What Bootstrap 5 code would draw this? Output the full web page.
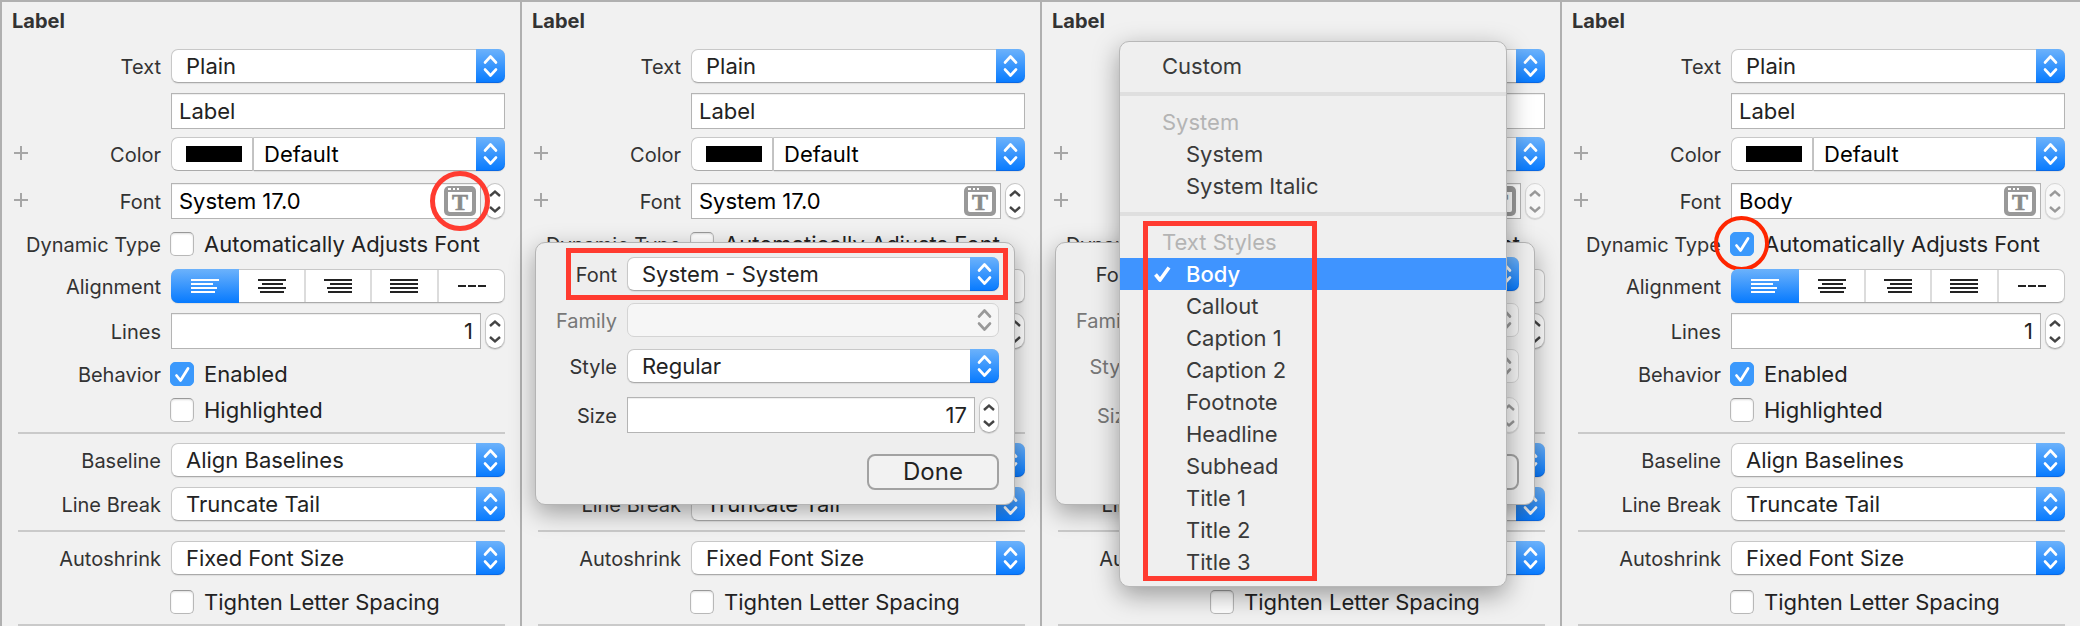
<!DOCTYPE html>
<html lang="en">
<head>
<meta charset="utf-8">
<meta name="viewport" content="width=device-width, initial-scale=1">
<title>Label inspector</title>
<link rel="stylesheet" href="https://cdn.jsdelivr.net/npm/bootstrap@5.3.0/dist/css/bootstrap.min.css">
<style>
  :root { --ink: #222; --line: #b4b4b4; --red: #ff3b30; --capw: 29px; --text: 22px; --label: 20px; }
  body { font-family: Inter, Roboto, "Liberation Sans", sans-serif; font-size: var(--text); line-height: 1; color: var(--ink); background: #f1f1f1; }
  .inspectors { border-top: 2px solid #b0b0b0; }
  .inspector { flex: 1 1 0; min-width: 480px; border-left: 2px solid #b0b0b0; }
  .inspector h2 { font-size: var(--label); font-weight: 700; line-height: 38px; height: 47px; margin: 0; padding-left: 10px; color: #333; }
  .prop { padding-right: 15px; }
  .prop-label { width: 159px; margin-right: 10px; font-size: var(--label); text-align: right; flex: none; position: relative; white-space: nowrap; color: #333; padding-top: 2px; }
  .prop-control { flex: 1 1 0; min-width: 0; }
  .gap-s { margin-top: 8px; } .gap-m { margin-top: 10px; } .gap-l { margin-top: 12px; } .gap-xl { margin-top: 14px; }
  .rule { height: 2px; margin: 9px 15px 9px 16px; background: #cacaca; border: 0; opacity: 1; }
  .rule-last { margin-bottom: 0; }
  .plus { position: absolute; left: 12px; top: 3px; width: 14px; height: 14px; padding: 0; border: 0; background: none; line-height: 0; display: block; }

  .popup { position: relative; flex: 1 1 0; min-width: 0; }
  .popup select { display: block; width: 100%; height: 34px; padding: 0 34px 0 14px; font-size: var(--text); line-height: 32px; color: var(--ink); background: #fff; border: 1px solid #c8c8c8; border-bottom-color: #aaa; border-radius: 7px; appearance: none; box-shadow: 0 1px 1px rgba(0,0,0,.08); }
  .popup::after { content: ""; position: absolute; top: 0; right: 0; width: var(--capw); height: 34px; border-radius: 0 7px 7px 0; pointer-events: none;
    background: url("data:image/svg+xml,%3Csvg xmlns='http://www.w3.org/2000/svg' width='29' height='34' fill='none' stroke='%23fff' stroke-width='2.6' stroke-linecap='round' stroke-linejoin='round'%3E%3Cpath d='M9 13.5l5.500-6 5.500 6M9 20.500l5.500 6 5.500-6'/%3E%3C/svg%3E") center no-repeat, linear-gradient(#6cb2fb, #067aff); box-shadow: inset 0 -1px 0 #0a68e4; }
  .popup.off select { background: #f6f6f6; border-color: #d4d4d4; opacity: 1; color: #777; box-shadow: none; }
  .popup.off::after { box-shadow: none; background: url("data:image/svg+xml,%3Csvg xmlns='http://www.w3.org/2000/svg' width='29' height='34' fill='none' stroke='%23999' stroke-width='2.6' stroke-linecap='round' stroke-linejoin='round'%3E%3Cpath d='M9 13.5l5.500-6 5.500 6M9 20.500l5.500 6 5.500-6'/%3E%3C/svg%3E") center no-repeat; }
  .well { width: 83px; height: 34px; flex: none; padding: 0 10px 0 14px; background: #fff; border: 1px solid #c8c8c8; border-right: 2px solid #c4c4c4; border-bottom-color: #aaa; border-radius: 7px 0 0 7px; }
  .well span { display: block; height: 16px; background: #000; }
  .well + .popup select { border-left: 0; border-radius: 0 7px 7px 0; padding-left: 10px; color: #000; }

  .field { width: 100%; height: 36px; padding: 0 7px; font-size: var(--text); line-height: 34px; background: #fff; color: var(--ink); border: 1px solid var(--line); border-radius: 0; box-shadow: inset 0 1px 1px #eee; }
  .field-font { color: #000; }
  .fontpick { position: absolute; top: 3px; right: 5px; width: 32px; height: 30px; padding: 0; border: 0; background: none; line-height: 0; }
  .stepper { width: 20px; height: 36px; margin-left: 4px; flex: none; display: flex; flex-direction: column; background: #fff; border: 1px solid #c6c6c6; border-bottom-color: #aaa; border-radius: 10px; box-shadow: 0 1px 1px rgba(0,0,0,.12); color: #444; }
  .stepper button { flex: 1; width: 100%; padding: 0; border: 0; background: none; color: inherit; line-height: 0; display: flex; justify-content: center; align-items: center; }
  .stepper.off { color: #999; background: #f8f8f8; border-color: #d6d6d6; }

  .tick { height: 26px; position: relative; }
  .tick input { appearance: none; width: 24px; height: 24px; margin: 0 10px 0 -1px; flex: none; border: 1px solid #b8b8b8; border-top-color: #999; border-radius: 5px; background: #fff; box-shadow: inset 0 1px 2px #ddd; }
  .tick input:checked { border-color: #3b99fc; box-shadow: none; background: #3b99fc url("data:image/svg+xml,%3Csvg xmlns='http://www.w3.org/2000/svg' viewBox='0 0 22 22' fill='none' stroke='%23fff' stroke-width='2.8' stroke-linecap='round' stroke-linejoin='round'%3E%3Cpath d='M5.500 12.500l4 5L17 5.500'/%3E%3C/svg%3E") center no-repeat; }
  .tick label { white-space: nowrap; }

  .segments { height: 34px; border: 1px solid #c8c8c8; border-bottom-color: #aaa; border-radius: 7px; background: #fff; box-shadow: 0 1px 1px rgba(0,0,0,.08); }
  .segments label { width: 20%; flex: none; display: flex; align-items: center; justify-content: center; border-right: 2px solid #dcdcdc; color: #222; }
  .segments label:last-child { border-right: 0; }
  .segments input:checked + label { background: linear-gradient(#6cb2fb, #067aff); color: #fff; width: calc(20% + 2px); margin: -1px 0 -1px -1px; border-right: 0; border-radius: 7px 0 0 7px; }

  .ring { position: absolute; border: 5px solid var(--red); pointer-events: none; }
  .ring-font { border-radius: 50%; width: 60px; height: 60px; top: -12px; right: -9px; z-index: 2; }
  .ring-tick { border-radius: 50%; border: 4px solid #ff2600; width: 55px; height: 55px; top: -15px; left: -17px; }

  .font-popover { position: absolute; top: 240px; left: 13px; right: 25px; padding: 14px 15px; background: #eee; border: 1px solid #b4b4b4; border-radius: 10px; box-shadow: 0 8px 24px rgba(0,0,0,.34); }
  .font-popover .prop { padding-right: 0; }
  .font-popover .prop-label { width: 66px; }
  .font-popover .dim { color: #777; }
  .ring-row { top: -9px; bottom: -9px; left: 15px; right: -9px; }
  .done { width: 132px; height: 36px; padding: 0; font-size: 24px; line-height: 32px; color: var(--ink); background: #f2f2f2; border: 2px solid #a2a2a2; border-radius: 8px; margin-top: 21px; }

  .font-menu { position: absolute; top: 39px; left: 77px; right: 53px; padding: 8px 0; margin: 0; list-style: none; background: #efefef; border: 1px solid #b8b8b8; border-radius: 10px; box-shadow: 0 8px 26px rgba(0,0,0,.36); color: #3a3a3a; }
  .font-menu ul { list-style: none; margin: 0; padding: 0; position: relative; }
  .font-menu .entry { display: block; width: 100%; height: 32px; padding: 0 0 0 66px; line-height: 32px; font-size: var(--text); text-align: left; border: 0; background: none; color: inherit; position: relative; }
  .font-menu .top { padding-left: 42px; }
  .font-menu .heading { color: #b4b4b4; }
  .font-menu .chosen { background: #3f94ff; color: #fff; font-weight: 500; }
  .font-menu .chosen svg { position: absolute; left: 34px; top: 8px; }
  .font-menu .split { height: 4px; margin: 10px 0; background: #dfdfdf; }
  .ring-styles { top: -5px; bottom: -3px; left: 23px; width: 174px; }
</style>
</head>
<body>
<main class="inspectors d-flex" id="inspectors"></main>

<script>
const bars = d => `<svg width="28" height="14" stroke="currentColor" stroke-width="2"><path d="${d}"/></svg>`;
const icons = {
  left: bars('M0 1h28M0 5h22M0 9h26M0 13h24'),
  center: bars('M0 1h28M4 5h21M0 9h28M2 13h24'),
  right: bars('M0 1h28M6 5h22M3 9h25M4 13h24'),
  justified: bars('M0 1h28M0 5h28M0 9h28M0 13h28'),
  natural: bars('M0 7h8M10 7h8M20 7h8'),
  plus: '<svg width="14" height="14" stroke="#a6a6a6" stroke-width="2"><path d="M7 0v14M0 7h14"/></svg>',
  up: '<svg width="12" height="8" fill="none" stroke="currentColor" stroke-width="2.400"><path d="M1 7l5-4.500L11 7"/></svg>',
  down: '<svg width="12" height="8" fill="none" stroke="currentColor" stroke-width="2.400"><path d="M1 1l5 4.500L11 1"/></svg>',
  check: '<svg width="17" height="16" fill="none" stroke="#fff" stroke-width="3.600" stroke-linejoin="round"><path d="M1.500 8.500l4.500 5.500L15 1.500"/></svg>',
  font: `<svg width="32" height="30"><rect width="32" height="30" rx="5" fill="#999"/><path d="M4 6h24v18a2 2 0 0 1-2 2H6a2 2 0 0 1-2-2z" fill="#fff"/>
    <path d="M4 2h3v2H4zM9 2h2v2H9zM13 2h2v2h-2z" fill="#fff"/><text x="16" y="24" text-anchor="middle" font-family="Liberation Serif, serif" font-weight="700" font-size="24" fill="#8a8a8a" stroke="#8a8a8a" stroke-width=".6">T</text></svg>`
};

const row = (gap, label, forId, control, { plus = false, dim = false, extra = '' } = {}) => `
  <div class="prop d-flex align-items-center position-relative ${gap}">
    <label class="prop-label ${dim ? 'dim' : ''}" ${forId ? `for="${forId}"` : ''}>${plus ? `<button type="button" class="plus" aria-label="Add variation">${icons.plus}</button>` : ''}${label}</label>
    <div class="prop-control d-flex">${control}</div>${extra}
  </div>`;
const popup = (id, value, off = false) => `
  <div class="popup ${off ? 'off' : ''}"><select id="${id}" ${off ? 'disabled' : ''}><option>${value}</option></select></div>`;
const stepper = (off = false) => `
  <div class="stepper ${off ? 'off' : ''}"><button type="button" aria-label="Increase">${icons.up}</button><button type="button" aria-label="Decrease">${icons.down}</button></div>`;
const tick = (id, text, on = false, extra = '') => `
  <div class="tick d-flex align-items-center"><input type="checkbox" id="${id}" ${on ? 'checked' : ''}><label for="${id}">${text}</label>${extra}</div>`;
const segments = id => `
  <div class="segments d-flex flex-grow-1" role="group" aria-label="Alignment">${['left', 'center', 'right', 'justified', 'natural'].map((a, i) => `
    <input type="radio" class="btn-check" name="${id}" id="${id}-${a}" ${i ? '' : 'checked'}><label for="${id}-${a}" aria-label="${a}">${icons[a]}</label>`).join('')}
  </div>`;
const fontField = (id, o) => `
  <div class="position-relative flex-grow-1">
    <input class="field field-font" id="${id}" value="${o.font}">
    <button type="button" class="fontpick" aria-label="Choose font">${icons.font}</button>
    ${o.markFont ? '<span class="ring ring-font"></span>' : ''}
  </div>${stepper(o.lockSize)}`;

const fontPopover = (p, o) => `
  <section class="font-popover">
    ${row('', 'Font', p + 'pf', popup(p + 'pf', o.fontChoice), { extra: o.markRow ? '<span class="ring ring-row"></span>' : '' })}
    ${row('gap-l', 'Family', p + 'pfam', popup(p + 'pfam', '', true), { dim: true })}
    ${row('gap-l', 'Style', p + 'pst', popup(p + 'pst', o.locked ? '' : 'Regular', o.locked), { dim: o.locked })}
    ${row('gap-xl', 'Size', p + 'psz', `<input class="field text-end" id="${p}psz" value="${o.locked ? '' : '17'}">${stepper(o.locked)}`, { dim: o.locked })}
    <div class="d-flex justify-content-end"><button type="button" class="done">${o.locked ? '' : 'Done'}</button></div>
  </section>`;

const entry = (t, cls = '') => `<li><button type="button" class="entry ${cls}">${cls.includes('chosen') ? icons.check : ''}${t}</button></li>`;
const fontMenu = () => `
  <ul class="font-menu">
    ${entry('Custom', 'top')}
    <li class="split"></li>
    <li class="entry top heading">System</li>
    ${entry('System')}${entry('System Italic')}
    <li class="split"></li>
    <li><ul>
      <li class="entry top heading">Text Styles</li>
      ${entry('Body', 'chosen')}
      ${['Callout', 'Caption 1', 'Caption 2', 'Footnote', 'Headline', 'Subhead', 'Title 1', 'Title 2', 'Title 3'].map(t => entry(t)).join('')}
      <li class="ring ring-styles"></li>
    </ul></li>
  </ul>`;

const inspector = (o, i) => {
  const p = 'i' + (i + 1);
  return `
  <section class="inspector position-relative">
    <h2>Label</h2>
    ${row('', 'Text', p + 'text', popup(p + 'text', 'Plain'))}
    ${row('gap-m', '', '', `<input class="field" aria-label="Label text" value="Label">`)}
    ${row('gap-s', 'Color', p + 'color', `<button type="button" class="well" aria-label="Color well"><span></span></button>${popup(p + 'color', 'Default')}`, { plus: true })}
    ${row('gap-l', 'Font', p + 'font', fontField(p + 'font', o), { plus: true })}
    ${row('gap-l', 'Dynamic Type', p + 'dyn', tick(p + 'dyn', 'Automatically Adjusts Font', o.dynamic, o.dynamic ? '<span class="ring ring-tick"></span>' : ''))}
    ${row('gap-l', 'Alignment', '', segments(p + 'al'))}
    ${row('gap-m', 'Lines', p + 'lines', `<input class="field text-end" id="${p}lines" value="1">${stepper()}`)}
    ${row('gap-l', 'Behavior', p + 'en', tick(p + 'en', 'Enabled', true))}
    ${row('gap-m', '', '', tick(p + 'hi', 'Highlighted'))}
    <hr class="rule">
    ${row('', 'Baseline', p + 'base', popup(p + 'base', 'Align Baselines'))}
    ${row('gap-m', 'Line Break', p + 'brk', popup(p + 'brk', 'Truncate Tail'))}
    <hr class="rule">
    ${row('', 'Autoshrink', p + 'shr', popup(p + 'shr', 'Fixed Font Size'))}
    ${row('gap-xl', '', '', tick(p + 'tls', 'Tighten Letter Spacing'))}
    <hr class="rule rule-last">
    ${o.popover ? fontPopover(p, o) : ''}
    ${o.menu ? fontMenu() : ''}
  </section>`;
};

document.getElementById('inspectors').innerHTML = [
  { font: 'System 17.0', markFont: true },
  { font: 'System 17.0', popover: true, fontChoice: 'System - System', markRow: true },
  { font: 'Body', lockSize: true, popover: true, fontChoice: 'Body', locked: true, menu: true },
  { font: 'Body', lockSize: true, dynamic: true }
].map(inspector).join('');
</script>
<script src="https://cdn.jsdelivr.net/npm/bootstrap@5.3.0/dist/js/bootstrap.bundle.min.js"></script>
</body>
</html>
